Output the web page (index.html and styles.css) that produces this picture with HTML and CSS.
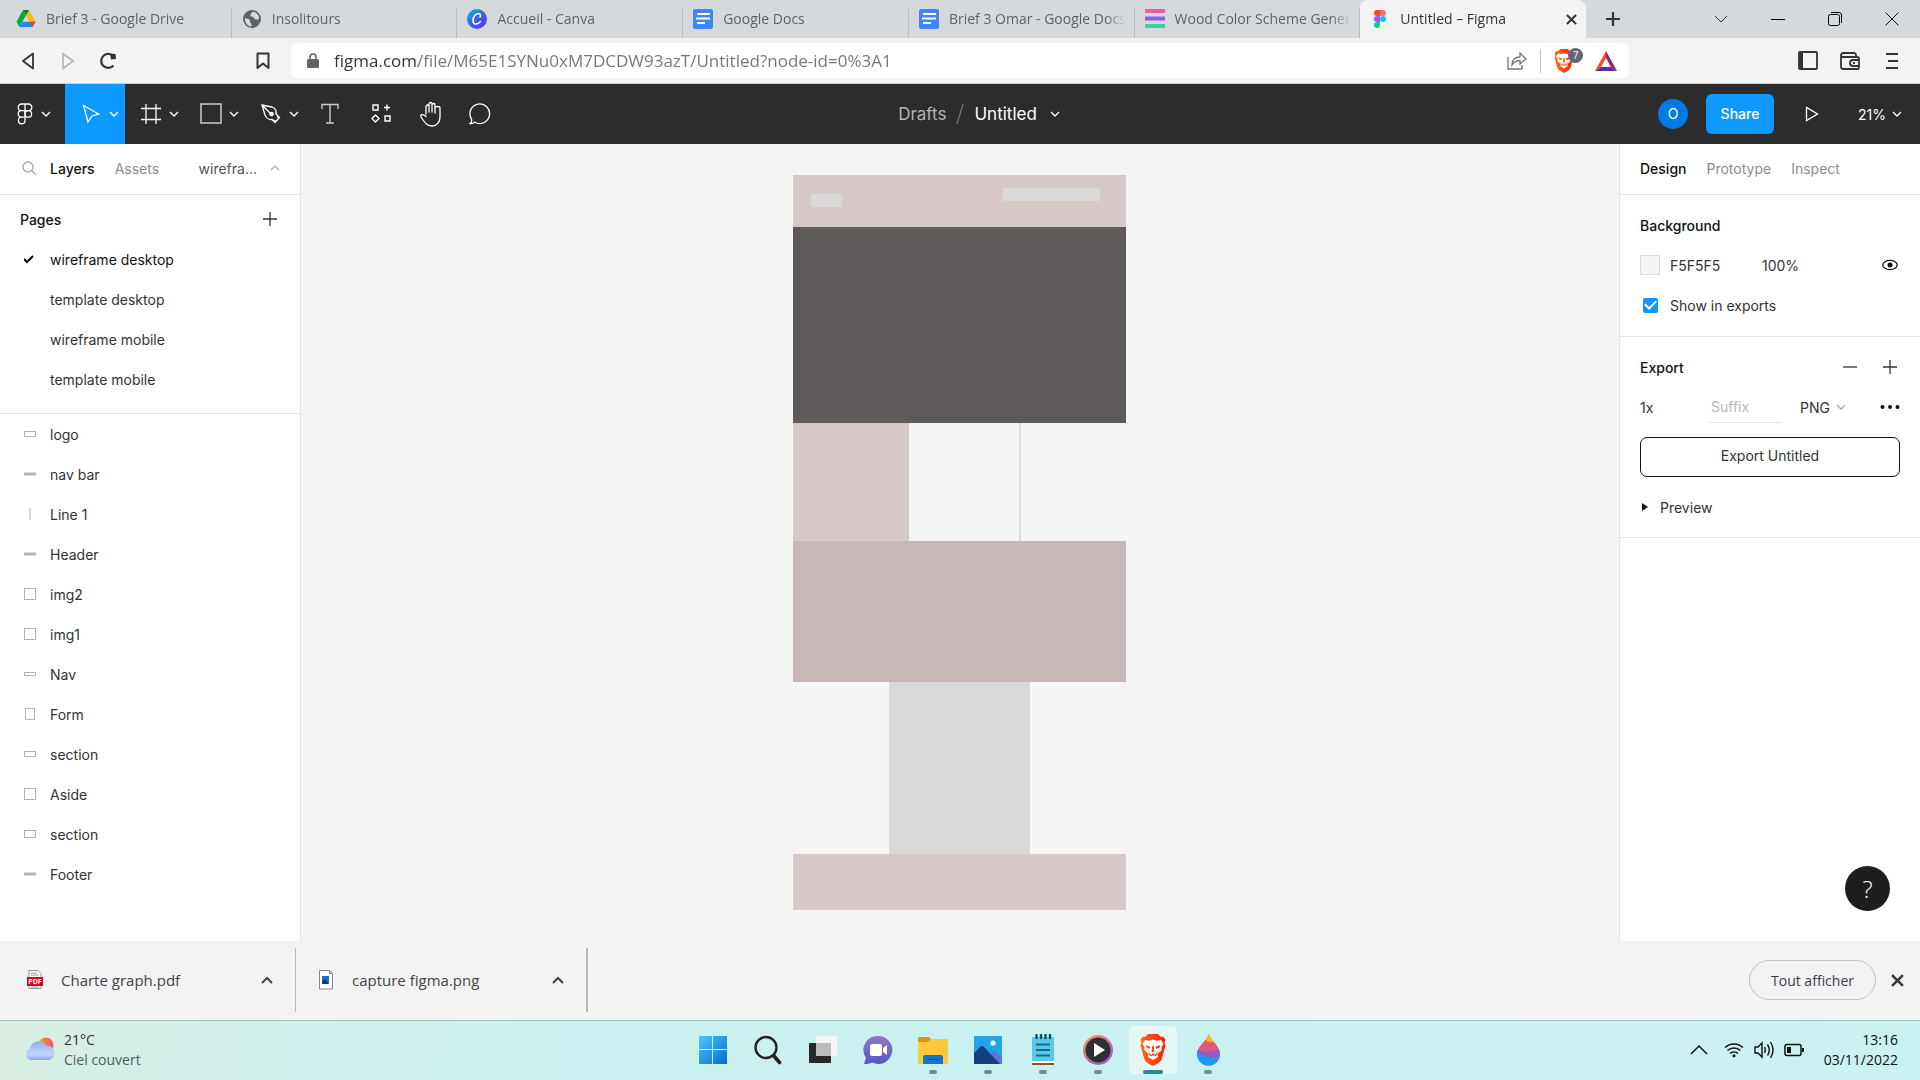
FILE: index.html
```html
<!DOCTYPE html>
<html lang="fr">
<head>
<meta charset="utf-8">
<title>Untitled – Figma</title>
<link rel="stylesheet" href="styles.css">
</head>
<body>
<svg class="defs" aria-hidden="true">
  <defs>
    <symbol id="chev-down" viewBox="0 0 10 10"><path d="M1 3l4 4 4-4" fill="none" stroke="currentColor" stroke-width="1.4"/></symbol>
    <symbol id="docs" viewBox="0 0 20 20"><rect width="20" height="20" rx="2" fill="#4285f4"/><path d="M4 5h13M3 9.500h14M4 14h8" stroke="#fff" stroke-width="2.200"/></symbol>
    <symbol id="plus" viewBox="0 0 16 16"><path d="M8 1v14M1 8h14" stroke="currentColor" stroke-width="1.300"/></symbol>
    <symbol id="caret-up" viewBox="0 0 12 8"><path d="M1 7l5-5 5 5" fill="none" stroke="currentColor" stroke-width="2"/></symbol>
    <symbol id="cross" viewBox="0 0 12 12"><path d="M1 1l10 10M11 1L1 11" stroke="currentColor" stroke-width="2.200"/></symbol>
    <symbol id="brave" viewBox="0 0 26 32">
      <linearGradient id="braveFill" x1="0" x2="1"><stop stop-color="#ff6a1a"/><stop offset="1" stop-color="#ff2000"/></linearGradient>
      <path d="M8 0h10l3 3 2-.5 2.500 3-1 3 1 3-3.500 12.500c-1 4-5 6-9 8-4-2-8-4-9-8L.5 11.500l1-3-1-3 2.500-3 2 .5z" fill="url(#braveFill)"/>
      <path d="M5 6l4 .8 4-1.200 4 1.200L21 6l2.500 4-2 3 .3 3-4.300 4 .5 3-5 3-5-3 .5-3-4.300-4 .3-3-2-3z" fill="#fff"/>
      <path d="M5.500 11l5 1.800-1 2.200-3-1.500zM20.500 11l-5 1.800 1 2.200 3-1.500zM11 19.500h4l-2 1.500zM12.200 12h1.600l.5 6h-2.600zM8 17l3 4 2-1 2 1 3-4-1.800 5.300L13 21.500l-3.200.8z" fill="url(#braveFill)"/>
    </symbol>
  </defs>
</svg>

<header class="browser">
  <div class="tabstrip">
    <nav class="tabs" aria-label="Onglets">
      <a class="tab" href="#">
        <svg width="20" height="20" viewBox="0 0 20 20"><path d="M7 1h6l-6.500 11.500L3.500 18 .5 12.700z" fill="#00ac47"/><path d="M7 1h6l6.500 11.700h-6z" fill="#ffba00"/><path d="M6.500 12.700h13L16.500 18h-13z" fill="#2684fc"/><path d="M7 1h6l-3 5.300z" fill="#00832d"/><path d="M13.500 12.700h6l-3 5.300z" fill="#ea4335"/></svg>
        <span class="tab-title">Brief 3 - Google Drive</span></a>
      <a class="tab" href="#">
        <svg width="20" height="20" viewBox="0 0 20 20"><circle cx="10" cy="10" r="9" fill="#5f6368"/><path d="M3 9c2 1 5 .5 5 3s2 2 1.500 5.500C5 17 2.500 13 3 9zM11 2.500c-1 2-3 1.500-2.500 4C9 8 11 7 12 9s3 1 4 2l1-2c0-3-3-6-6-6.500z" fill="#d5d9dc"/></svg>
        <span class="tab-title">Insolitours</span></a>
      <a class="tab" href="#">
        <svg width="20" height="20" viewBox="0 0 20 20"><linearGradient id="cv" x1="0" y1="0" x2="1" y2="1"><stop stop-color="#00c4cc"/><stop offset=".6" stop-color="#4154e8"/><stop offset="1" stop-color="#7d2ae8"/></linearGradient><circle cx="10" cy="10" r="10" fill="url(#cv)"/><path d="M13 8c1-1.500.5-3.500-1.500-3.500C8.500 4.500 6 8 6 11.500c0 4.500 4.500 4.500 7.500 1" fill="none" stroke="#fff" stroke-width="1.600" stroke-linecap="round"/></svg>
        <span class="tab-title">Accueil - Canva</span></a>
      <a class="tab" href="#"><svg width="20" height="20"><use href="#docs"/></svg><span class="tab-title">Google Docs</span></a>
      <a class="tab" href="#"><svg width="20" height="20"><use href="#docs"/></svg><span class="tab-title">Brief 3 Omar - Google Docs</span></a>
      <a class="tab" href="#">
        <svg width="20" height="20" viewBox="0 0 20 20"><path d="M0 2h20" stroke="#ec5fa5" stroke-width="4"/><path d="M0 9.500h20" stroke="#8b5fe8" stroke-width="4"/><path d="M0 17h20" stroke="#34d399" stroke-width="4"/></svg>
        <span class="tab-title">Wood Color Scheme Generator</span></a>
      <a class="tab tab-active" href="#" aria-current="page">
        <svg width="20" height="20" viewBox="0 0 20 20"><path d="M7 1h3v6H7a3 3 0 010-6z" fill="#f24e1e"/><path d="M10 1h3a3 3 0 010 6h-3z" fill="#ff7262"/><path d="M7 7h3v6H7a3 3 0 010-6z" fill="#a259ff"/><circle cx="13" cy="10" r="3" fill="#1abcfe"/><path d="M7 13h3v3.500A3 3 0 117 13z" fill="#0acf83"/></svg>
        <span class="tab-title">Untitled – Figma</span>
        <svg class="tab-close" width="11" height="11"><use href="#cross"/></svg></a>
    </nav>
    <button class="new-tab" aria-label="Nouvel onglet"><svg width="16" height="16" viewBox="0 0 16 16"><path d="M8 1v14M1 8h14" stroke="#333" stroke-width="2.200"/></svg></button>
    <div class="window-controls">
      <button aria-label="Rechercher"><svg width="14" height="14" viewBox="0 0 14 14"><path d="M1 4l6 6 6-6" fill="none" stroke="#333"/></svg></button>
      <button aria-label="Réduire"><svg width="14" height="14" viewBox="0 0 14 14"><path d="M0 7.500h14" stroke="#000"/></svg></button>
      <button aria-label="Restaurer"><svg width="14" height="14" viewBox="0 0 14 14" fill="none" stroke="#000"><rect x=".5" y="2.500" width="11" height="11" rx="2"/><path d="M3 .5h8a2.500 2.500 0 012.500 2.500v8"/></svg></button>
      <button aria-label="Fermer"><svg width="14" height="14" viewBox="0 0 14 14"><path d="M.5.5l13 13M13.500.5l-13 13" stroke="#111"/></svg></button>
    </div>
  </div>

  <div class="navbar">
    <div class="nav-left">
      <button aria-label="Retour"><svg width="16" height="18" viewBox="0 0 16 18"><path d="M13 1.500v15L3 9z" fill="none" stroke="#333" stroke-width="1.800" stroke-linejoin="round"/></svg></button>
      <button aria-label="Avancer"><svg width="16" height="18" viewBox="0 0 16 18"><path d="M3 1.500v15L13 9z" fill="none" stroke="#b9b9b9" stroke-width="1.800" stroke-linejoin="round"/></svg></button>
      <button aria-label="Recharger"><svg width="18" height="18" viewBox="0 0 18 18"><path d="M14.500 13.500A7 7 0 1115 5" fill="none" stroke="#333" stroke-width="2.200"/><path d="M11 1.500l5.500.5.500 5-5 .5z" fill="#333"/></svg></button>
      <button class="bookmark" aria-label="Favori"><svg width="14" height="18" viewBox="0 0 14 18"><path d="M1.500 1.500h11v14.500L7 11.500 1.500 16z" fill="none" stroke="#333" stroke-width="2" stroke-linejoin="round"/></svg></button>
    </div>
    <div class="address">
      <svg width="12" height="16" viewBox="0 0 12 16"><rect y="6" width="12" height="9" rx="1.500" fill="#5f6368"/><path d="M3 7V4a3 3 0 016 0v3" fill="none" stroke="#5f6368" stroke-width="1.600"/></svg>
      <input class="url" type="text" aria-label="Adresse" value="figma.com/file/M65E1SYNu0xM7DCDW93azT/Untitled?node-id=0%3A1">
      <button aria-label="Partager"><svg width="20" height="20" viewBox="0 0 20 20" fill="none" stroke="#777" stroke-width="1.300"><path d="M1 6v12h14v-4M5 14c0-5 3-8 8-8V2l6 6-6 5v-3.500c-4 0-6 1-8 4.500z"/></svg></button>
      <span class="divider"></span>
      <button class="shields" aria-label="Brave Shields"><svg width="20" height="24"><use href="#brave"/></svg><span class="badge">7</span></button>
      <button aria-label="Brave Rewards"><svg width="22" height="20" viewBox="0 0 22 20"><path d="M11 0L0 20l6-4 5-9z" fill="#ff4724"/><path d="M11 0l11 20-6-4-5-9z" fill="#9e1f63"/><path d="M0 20h22l-6-4H6z" fill="#662d91"/></svg></button>
    </div>
    <div class="nav-right">
      <button aria-label="Panneau latéral"><svg width="20" height="20" viewBox="0 0 20 20"><rect x="1" y="1" width="18" height="17" rx="1" fill="none" stroke="#333" stroke-width="1.800"/><path d="M1 1h4v17H1z" fill="#333"/></svg></button>
      <button aria-label="Portefeuille"><svg width="20" height="18" viewBox="0 0 20 18" fill="none" stroke="#333" stroke-width="1.800"><path d="M16 5V3a2 2 0 00-2-2H3a2 2 0 000 4h14a2 2 0 012 2v8a2 2 0 01-2 2H3a2 2 0 01-2-2V3M19 8h-6a3 3 0 000 6h6M13 11h2"/></svg></button>
      <button aria-label="Menu"><svg width="12" height="18" viewBox="0 0 12 18"><path d="M0 2h12M2 9h10M0 16h12" stroke="#333" stroke-width="2"/></svg></button>
    </div>
  </div>
</header>

<div class="toolbar">
  <div class="tools">
    <button class="tool tool-menu" aria-label="Menu principal"><svg width="18" height="22" viewBox="0 0 18 22" fill="none" stroke="#fff" stroke-width="1.300"><path d="M9 1H5.500a3.300 3.300 0 000 6.600H9zM9 1h3.500a3.300 3.300 0 010 6.600H9zM9 7.600H5.500a3.300 3.300 0 000 6.600H9zM9 14.200H5.500A3.300 3.300 0 109 17.500z"/><circle cx="12.300" cy="10.900" r="3.300"/></svg><svg width="10" height="10"><use href="#chev-down"/></svg></button>
    <button class="tool tool-active" aria-label="Déplacer"><svg width="22" height="22" viewBox="0 0 22 22" fill="none" stroke="#fff" stroke-width="1.300"><path d="M3.500 2.500l15 8.500-6.500 2-4 6z"/></svg><svg width="10" height="10"><use href="#chev-down"/></svg></button>
    <button class="tool" aria-label="Cadre"><svg width="22" height="22" viewBox="0 0 22 22" stroke="#fff" stroke-width="1.300"><path d="M6 1v20M16 1v20M1 5.500h20M1 16.500h20"/></svg><svg width="10" height="10"><use href="#chev-down"/></svg></button>
    <button class="tool" aria-label="Rectangle"><svg width="22" height="22" viewBox="0 0 22 22"><rect x="1" y="1" width="20" height="19" fill="none" stroke="#ccc" stroke-width="1.500"/></svg><svg width="10" height="10"><use href="#chev-down"/></svg></button>
    <button class="tool" aria-label="Plume"><svg width="22" height="22" viewBox="0 0 22 22" fill="none" stroke="#fff" stroke-width="1.300"><path d="M2 2l10 2c3 1 4.500 4 4 7l3.500 3.500-4.500 5-3-3C9 17 6 15 5 12zM2 2l9 9M20 14.500l-3-.5M13 17l3 1"/><circle cx="11.500" cy="11" r="1.700" fill="#fff"/></svg><svg width="10" height="10"><use href="#chev-down"/></svg></button>
    <button class="tool tool-single" aria-label="Texte"><svg width="18" height="22" viewBox="0 0 18 22" fill="none" stroke="#ccc" stroke-width="1.400"><path d="M1 6V1.500h16V6M9 1.500v18M5 20h8"/></svg></button>
    <button class="tool tool-single" aria-label="Ressources"><svg width="22" height="22" viewBox="0 0 22 22" fill="none" stroke="#fff" stroke-width="1.400"><path d="M4 2h5v5H4zM16 13h5v5h-5zM18 1.500v6M15 4.500h6M6.500 12l3.500 3.500L6.500 19 3 15.500z"/></svg></button>
    <button class="tool tool-single" aria-label="Main"><svg width="24" height="26" viewBox="0 0 24 26" fill="none" stroke="#fff" stroke-width="1.300" stroke-linejoin="round" stroke-linecap="round"><path d="M8 13V5.500c0-2 3-2 3 0V11 3c0-2 3-2 3 0v8-7c0-2 3-2 3 0v8-5c0-2 5-2 5 0v9c0 5-3 9-8 9s-7-3-11-9c-1-2 1-4 5-.5"/></svg></button>
    <button class="tool tool-single" aria-label="Commentaire"><svg width="22" height="22" viewBox="0 0 22 22" fill="none" stroke="#fff" stroke-width="1.300"><path d="M1 20.500c2-1 2-2.500 1.500-4.500A9.800 9.800 0 115.500 19c-1 1.500-2.500 1.700-4.500 1.500z"/></svg></button>
  </div>
  <div class="file-title">
    <a class="drafts" href="#">Drafts</a>
    <svg width="8" height="20" viewBox="0 0 8 20"><path d="M1 20L7 0" stroke="#777" stroke-width="1.200"/></svg>
    <button class="file-name">Untitled <svg width="10" height="10"><use href="#chev-down"/></svg></button>
  </div>
  <div class="actions">
    <span class="avatar">O</span>
    <button class="share">Share</button>
    <button class="play" aria-label="Présenter"><svg width="14" height="16" viewBox="0 0 14 16"><path d="M1.500 1.500v13L12.500 8z" fill="none" stroke="#fff" stroke-width="1.300"/></svg></button>
    <button class="zoom">21% <svg width="10" height="10"><use href="#chev-down"/></svg></button>
  </div>
</div>

<main class="workspace">
  <aside class="panel panel-left">
    <div class="panel-tabs left-tabs">
      <svg class="search" width="16" height="16" viewBox="0 0 16 16" fill="none" stroke="#aaa" stroke-width="1.400"><circle cx="7" cy="7" r="5"/><path d="M10.500 10.500L15 15"/></svg>
      <a class="current" href="#">Layers</a>
      <a href="#">Assets</a>
      <button class="page-switch">wirefra... <svg width="10" height="10" viewBox="0 0 10 10"><path d="M1 7l4-4 4 4" fill="none" stroke="#aaa" stroke-width="1.200"/></svg></button>
    </div>
    <section class="pages">
      <div class="pages-head"><h2>Pages</h2><button class="icon-btn" aria-label="Ajouter une page"><svg width="16" height="16"><use href="#plus"/></svg></button></div>
      <ul class="rows">
        <li class="row row-current"><svg width="12" height="12" viewBox="0 0 12 12"><path d="M0 6l3 3 6-6" fill="none" stroke="#000" stroke-width="2"/></svg>wireframe desktop</li>
        <li class="row"><span></span>template desktop</li>
        <li class="row"><span></span>wireframe mobile</li>
        <li class="row"><span></span>template mobile</li>
      </ul>
    </section>
    <ul class="rows layers">
      <li class="row"><svg width="12" height="12" viewBox="0 0 12 12"><rect x=".5" y="3.500" width="11" height="5"/></svg>logo</li>
      <li class="row"><svg width="12" height="12" viewBox="0 0 12 12"><path d="M0 6h12" stroke-width="3"/></svg>nav bar</li>
      <li class="row"><svg width="12" height="12" viewBox="0 0 12 12"><path d="M6 0v12"/></svg>Line 1</li>
      <li class="row"><svg width="12" height="12" viewBox="0 0 12 12"><path d="M0 6h12" stroke-width="3"/></svg>Header</li>
      <li class="row"><svg width="12" height="12" viewBox="0 0 12 12"><rect x=".5" y=".5" width="11" height="11"/></svg>img2</li>
      <li class="row"><svg width="12" height="12" viewBox="0 0 12 12"><rect x=".5" y=".5" width="11" height="11"/></svg>img1</li>
      <li class="row"><svg width="12" height="12" viewBox="0 0 12 12"><rect x=".5" y="4.500" width="11" height="3"/></svg>Nav</li>
      <li class="row"><svg width="12" height="12" viewBox="0 0 12 12"><rect x="1.500" y=".5" width="9" height="11"/></svg>Form</li>
      <li class="row"><svg width="12" height="12" viewBox="0 0 12 12"><rect x=".5" y="3.500" width="11" height="5"/></svg>section</li>
      <li class="row"><svg width="12" height="12" viewBox="0 0 12 12"><rect x=".5" y=".5" width="11" height="11"/></svg>Aside</li>
      <li class="row"><svg width="12" height="12" viewBox="0 0 12 12"><rect x=".5" y="2.500" width="11" height="7"/></svg>section</li>
      <li class="row"><svg width="12" height="12" viewBox="0 0 12 12"><path d="M0 6h12" stroke-width="3"/></svg>Footer</li>
    </ul>
  </aside>

  <div class="canvas">
    <div class="artboard">
      <div class="wf-header"><div class="wf-logo"></div><div class="wf-nav"></div></div>
      <div class="wf-hero"></div>
      <div class="wf-columns"><div class="wf-aside"></div><div class="wf-line"></div></div>
      <div class="wf-section"></div>
      <div class="wf-form"></div>
      <div class="wf-footer"></div>
    </div>
  </div>

  <aside class="panel panel-right">
    <div class="panel-tabs">
      <a class="current" href="#">Design</a>
      <a href="#">Prototype</a>
      <a href="#">Inspect</a>
    </div>
    <section class="prop">
      <div class="prop-row"><h2>Background</h2></div>
      <div class="prop-row">
        <span class="swatch"></span>
        <input class="field hex" type="text" aria-label="Couleur" value="F5F5F5">
        <input class="field opacity" type="text" aria-label="Opacité" value="100%">
        <button class="icon-btn push" aria-label="Visibilité"><svg width="16" height="12" viewBox="0 0 16 12"><ellipse cx="8" cy="6" rx="7.200" ry="4.700" fill="none" stroke="#111" stroke-width="1.300"/><circle cx="8" cy="6" r="2.500" fill="#111"/></svg></button>
      </div>
      <div class="prop-row"><label class="check"><input type="checkbox" checked>Show in exports</label></div>
    </section>
    <section class="prop">
      <div class="prop-row"><h2>Export</h2>
        <button class="icon-btn push" aria-label="Retirer"><svg width="16" height="16" viewBox="0 0 16 16"><path d="M1 8h14" stroke="#333" stroke-width="1.300"/></svg></button>
        <button class="icon-btn" aria-label="Ajouter"><svg width="16" height="16"><use href="#plus"/></svg></button></div>
      <div class="prop-row">
        <input class="field scale" type="text" aria-label="Échelle" value="1x">
        <input class="field suffix" type="text" aria-label="Suffixe" placeholder="Suffix">
        <label class="format"><select class="field" aria-label="Format"><option>PNG</option></select><svg width="10" height="10"><use href="#chev-down"/></svg></label>
        <button class="icon-btn push" aria-label="Plus d'options"><svg width="20" height="4" viewBox="0 0 20 4" fill="#111"><circle cx="2.500" cy="2" r="2"/><circle cx="10" cy="2" r="2"/><circle cx="17.500" cy="2" r="2"/></svg></button>
      </div>
      <button class="export">Export Untitled</button>
      <button class="preview"><svg width="10" height="8" viewBox="0 0 10 8"><path d="M2 0l6 4-6 4z" fill="#111"/></svg>Preview</button>
    </section>
    <button class="help" aria-label="Aide">?</button>
  </aside>
</main>

<section class="downloads" aria-label="Téléchargements">
  <div class="download">
    <svg width="18" height="20" viewBox="0 0 18 20"><path d="M3 .5h9l3 3v15H3z" fill="#fff" stroke="#999"/><path d="M5 3h6M5 5h8M5 17h8" stroke="#999"/><rect x="1" y="7" width="16" height="9" fill="#e2001a"/><text x="9" y="14" text-anchor="middle" class="pdf-tag">PDF</text></svg>
    <a href="#">Charte graph.pdf</a>
    <button aria-label="Options"><svg width="12" height="8"><use href="#caret-up"/></svg></button>
  </div>
  <div class="download">
    <svg width="18" height="20" viewBox="0 0 18 20"><path d="M2.500.5h10l3 3V19h-13z" fill="#fff" stroke="#888"/><path d="M12.500.5v3h3" fill="none" stroke="#888"/><rect x="5" y="6" width="7" height="8" fill="#1673c7"/><path d="M5 12l3-3 4 5H5z" fill="#123a75"/></svg>
    <a href="#">capture figma.png</a>
    <button aria-label="Options"><svg width="12" height="8"><use href="#caret-up"/></svg></button>
  </div>
  <button class="show-all">Tout afficher</button>
  <button class="dismiss" aria-label="Fermer"><svg width="13" height="13"><use href="#cross"/></svg></button>
</section>

<footer class="taskbar">
  <div class="weather">
    <svg width="32" height="26" viewBox="0 0 32 26"><linearGradient id="sun" x2="1"><stop stop-color="#ff9d2e"/><stop offset="1" stop-color="#f9526a"/></linearGradient><linearGradient id="cl" x2="0" y2="1"><stop stop-color="#8fb2ee"/><stop offset=".7" stop-color="#c3d6fa"/><stop offset="1" stop-color="#8aa6ea"/></linearGradient><circle cx="22" cy="8" r="7.500" fill="url(#sun)"/><path d="M7 23a6 6 0 01-1-11.500A8.500 8.500 0 0122 9a7 7 0 013 14z" fill="url(#cl)"/></svg>
    <div><p>21°C</p><p class="sky">Ciel couvert</p></div>
  </div>
  <div class="apps">
    <button class="app" aria-label="Démarrer"><svg width="30" height="30" viewBox="0 0 30 30"><linearGradient id="win" x2="1" y2="1"><stop stop-color="#4cc8fa"/><stop offset="1" stop-color="#0669cf"/></linearGradient><path d="M1 1h13v13H1zM15 1h14v13H15zM1 15h13v14H1zM15 15h14v14H15z" fill="url(#win)"/></svg></button>
    <button class="app" aria-label="Rechercher"><svg width="30" height="30" viewBox="0 0 30 30" fill="none" stroke="#222"><circle cx="13" cy="12.500" r="10.500" stroke-width="2.400"/><path d="M20.500 20.500l6 7" stroke-width="3.600" stroke-linecap="round"/></svg></button>
    <button class="app" aria-label="Vue des tâches"><svg width="30" height="30" viewBox="0 0 30 30"><rect x="1" y="8" width="22" height="20" rx="1" fill="#272727"/><rect x="8" y="1" width="21" height="20" rx="1" fill="#f4f4f4"/><path d="M8 8h15v13H8z" fill="#bcbcbc"/></svg></button>
    <button class="app" aria-label="Conversation"><svg width="30" height="30" viewBox="0 0 30 30"><linearGradient id="chat" y2="1" x2="0"><stop stop-color="#9078c4"/><stop offset="1" stop-color="#5458c8"/></linearGradient><path d="M15 1a14 14 0 11-6 26.500c-2 1-5 1.500-8 1.500l2-6A14 14 0 0115 1z" fill="url(#chat)"/><rect x="7" y="9" width="12" height="12" rx="2" fill="#fff"/><path d="M20 13l4-3v10l-4-3z" fill="#fff"/></svg></button>
    <button class="app running" aria-label="Explorateur"><svg width="30" height="30" viewBox="0 0 30 30"><path d="M0 3a1 1 0 011-1h10l3 3-3 4H0z" fill="#dd9a05"/><path d="M0 7h10l3-3h16a1 1 0 011 1v24H0z" fill="#fdc93a"/><path d="M5 29v-7a2 2 0 012-2h16a2 2 0 012 2v7z" fill="#0f78d0"/><path d="M9 24.500h12" stroke="#084c94"/></svg></button>
    <button class="app running" aria-label="Photos"><svg width="30" height="30" viewBox="0 0 30 30"><rect x="1" y="1" width="28" height="28" rx="1" fill="#24a3e8"/><path d="M14 24l7-9 8 8v6H14z" fill="#5f74d6"/><path d="M1 18l6-6q2-2 4 0l16 17H1z" fill="#143f82"/><circle cx="20" cy="8" r="2.600" fill="#fff"/></svg></button>
    <button class="app running" aria-label="Bloc-notes"><svg width="30" height="32" viewBox="0 0 30 32"><rect x="4" y="3" width="22" height="26" rx="1" fill="#5cc8e3"/><path d="M4 28h22v3H4z" fill="#a1500f"/><path d="M4 27h22v2H4z" fill="#fff"/><path d="M8.500 1v3M13 1v3M17.500 1v3M22 1v3" stroke="#06506e" stroke-width="2.400" stroke-linecap="round"/><path d="M8 10.500h14M8 16h14M8 21.500h14" stroke="#087094" stroke-width="1.800"/></svg></button>
    <button class="app running" aria-label="Lecteur multimédia"><svg width="32" height="32" viewBox="0 0 32 32"><linearGradient id="med" x2=".6" y2="1"><stop stop-color="#ff9c45"/><stop offset="1" stop-color="#a556c8"/></linearGradient><circle cx="16" cy="16" r="15" fill="url(#med)"/><circle cx="16" cy="16" r="12.500" fill="#303034"/><path d="M12 9l11 7-11 7z" fill="#fff"/></svg></button>
    <button class="app running focused" aria-label="Brave"><svg width="26" height="32"><use href="#brave"/></svg></button>
    <button class="app running" aria-label="Paint 3D"><svg width="26" height="32" viewBox="0 0 26 32"><clipPath id="drop"><path d="M14 0c1 5 11 12 11 20a11.500 11.500 0 01-23 0C2 12 11 8 14 0z"/></clipPath><g clip-path="url(#drop)"><path d="M0 0h26v32H0z" fill="#e4577f"/><path d="M9 0h17v11c-5-1-9-4-14-3z" fill="#fdb913"/><path d="M0 14c9 6 16 3 26 1v10c-8 2-14 1-26-4z" fill="#8b5fc4"/><path d="M0 19c8 0 14 8 26 4v9H0z" fill="#1e9be8"/></g></svg></button>
  </div>
  <div class="tray">
    <svg width="18" height="12" viewBox="0 0 18 12"><path d="M1 10l8-8 8 8" fill="none" stroke="#111" stroke-width="1.500"/></svg>
    <svg width="20" height="16" viewBox="0 0 20 16" fill="none" stroke="#111" stroke-width="1.500"><path d="M1 5.500a13 13 0 0118 0M3.500 8.500a9.500 9.500 0 0113 0M6 11.500a6 6 0 018 0"/><circle cx="10" cy="13.800" r="1.500" fill="#111" stroke="none"/></svg>
    <svg width="20" height="18" viewBox="0 0 20 18" fill="none" stroke="#111" stroke-width="1.400"><path d="M1 6h3l4-4v14l-4-4H1zM10.500 6q1.500 3 0 6M13.500 3.500q3.500 5.500 0 11M16.500 1q5 8 0 16"/></svg>
    <svg width="20" height="14" viewBox="0 0 20 14"><rect x="1" y="1.500" width="16" height="11" rx="2" fill="none" stroke="#111" stroke-width="1.500"/><path d="M3 4h4v6H3zM18 5h2v4h-2z" fill="#111"/></svg>
    <div class="clock"><p>13:16</p><p>03/11/2022</p></div>
  </div>
</footer>
</body>
</html>
```
FILE: styles.css
```css
* { box-sizing: border-box; }

body {
  margin: 0;
  min-height: 100vh;
  display: flex;
  flex-direction: column;
  font-family: Inter, "Liberation Sans", sans-serif;
  font-size: 14px;
  color: #333;
  background: #f5f5f5;
}

button, input, select {
  font: inherit;
  color: inherit;
  background: none;
  border: 0;
  padding: 0;
  margin: 0;
  outline: 0;
}

a { color: inherit; text-decoration: none; }
h2, p, ul { margin: 0; padding: 0; }
ul { list-style: none; }
h2 { font-size: 14px; font-weight: 500; color: #111; }
svg { display: block; flex: none; }
.defs { position: absolute; width: 0; height: 0; }

button {
  display: flex;
  align-items: center;
  justify-content: center;
}

/* Browser chrome */
.browser, .downloads, .taskbar {
  font-family: "Open Sans", "Noto Sans", sans-serif;
}

.tabstrip {
  height: 38px;
  padding-left: 6px;
  display: flex;
  background: #d5d9dc;
}

.tabs {
  flex: 0 1 1580px;
  min-width: 0;
  display: flex;
  align-items: flex-end;
}

.tab {
  flex: 1 1 0;
  min-width: 0;
  height: 29px;
  padding: 0 8px 9px 10px;
  display: flex;
  align-items: center;
  gap: 10px;
  border-right: 1px solid #b9bdc0;
  color: #5f6368;
}

.tab-title {
  flex: 1;
  overflow: hidden;
  white-space: nowrap;
  line-height: 20px;
  mask-image: linear-gradient(90deg, #000 calc(100% - 20px), transparent);
}

.tab-active {
  height: 38px;
  padding-bottom: 0;
  border-right-color: transparent;
  border-radius: 8px 8px 0 0;
  background: #f3f3f3;
  color: #333;
}

.new-tab { width: 54px; }
.window-controls { margin-left: auto; display: flex; }
.window-controls button { width: 57px; }

.navbar {
  height: 46px;
  display: flex;
  align-items: center;
  background: #f3f3f3;
  border-bottom: 1px solid #d0d0d0;
}

.nav-left, .nav-right {
  width: 291px;
  display: flex;
  align-items: center;
  padding: 0 8px;
}

.nav-left button { width: 40px; height: 34px; }
.nav-left .bookmark { margin-left: auto; }
.nav-right { justify-content: flex-end; gap: 2px; }
.nav-right button { width: 40px; height: 34px; }

.address {
  flex: 1;
  height: 35px;
  padding: 0 2px 0 16px;
  display: flex;
  align-items: center;
  border-radius: 6px;
  background: #fff;
}

.url {
  flex: 1;
  min-width: 0;
  margin-left: 15px;
  font-size: 17px;
  color: transparent;
  background: linear-gradient(90deg, #333 84px, #757575 84px);
  background-clip: text;
}

.address button { width: 42px; height: 34px; }
.divider { width: 1px; height: 24px; margin: 0 2px; background: #c0c0c0; }
.shields { position: relative; }

.badge {
  position: absolute;
  top: 4px;
  right: 2px;
  width: 15px;
  height: 15px;
  border-radius: 8px;
  background: #636678;
  color: #fff;
  font-size: 10px;
  line-height: 15px;
}

/* Editor toolbar */
.toolbar {
  height: 60px;
  display: grid;
  grid-template-columns: 1fr auto 1fr;
  background: #2c2c2c;
  color: #fff;
}

.tools { display: flex; }
.tool { width: 60px; gap: 7px; padding-left: 9px; }
.tool-menu { width: 65px; padding-left: 2px; }
.tool-active { background: #0d99ff; }
.tool-single { width: 50px; padding: 0; }

.file-title {
  display: flex;
  align-items: center;
  gap: 10px;
  padding-left: 38px;
  font-size: 17px;
}

.drafts { color: #b3b3b3; }
.file-name { gap: 13px; }

.actions {
  display: flex;
  align-items: center;
  justify-content: flex-end;
  padding-right: 18px;
}

.avatar {
  width: 30px;
  height: 30px;
  border-radius: 50%;
  background: #007be5;
  text-align: center;
  line-height: 30px;
}

.share {
  width: 68px;
  height: 40px;
  margin-left: 18px;
  padding-bottom: 2px;
  border-radius: 6px;
  background: #0d99ff;
  font-weight: 500;
}

.play { width: 76px; height: 40px; }
.zoom { height: 40px; gap: 6px; margin-left: 8px; }

/* Workspace */
.workspace { flex: 1; display: flex; }
.panel { width: 301px; flex: none; background: #fff; }
.panel-left { border-right: 1px solid #e6e6e6; }
.panel-right { position: relative; border-left: 1px solid #e6e6e6; }

.panel-tabs {
  height: 51px;
  padding: 0 20px 2px;
  display: flex;
  align-items: center;
  gap: 20px;
  border-bottom: 1px solid #e6e6e6;
  color: #8c8c8c;
}

.panel-tabs .current { font-weight: 500; color: #111; }
.left-tabs { padding-left: 21px; }
.search { margin-right: -7px; }
.page-switch { gap: 13px; margin-left: auto; color: #555; }

.pages { padding: 4px 0 14px; border-bottom: 1px solid #e6e6e6; }

.pages-head {
  height: 40px;
  padding: 0 10px 0 20px;
  display: flex;
  align-items: center;
  justify-content: space-between;
}

.icon-btn { width: 40px; height: 40px; color: #333; }

.row {
  height: 40px;
  padding-left: 24px;
  display: grid;
  grid-template-columns: 12px 1fr;
  column-gap: 14px;
  align-items: center;
}

.row-current { color: #111; }
.layers svg { fill: none; stroke: #b3b3b3; }

/* Canvas drawing */
.canvas { flex: 1; padding: 31px 22px 20px 20px; background: #f5f5f5; }
.artboard { width: 333px; margin: 0 auto; }

.wf-header {
  height: 52px;
  padding: 13px 26px 0 18px;
  display: flex;
  justify-content: space-between;
  background: #d7c9c7;
}

.wf-logo, .wf-nav, .wf-form, .wf-line { background: #d9d9d9; }
.wf-logo { width: 31px; height: 13px; margin-top: 6px; }
.wf-nav { width: 97px; height: 13px; }
.wf-hero { height: 196px; background: #5e5a59; }
.wf-columns { height: 118px; display: flex; gap: 110px; }
.wf-aside { width: 116px; background: #d7c9c7; }
.wf-line { width: 2px; }
.wf-section { height: 141px; background: #c7b7b7; }
.wf-form { width: 141px; height: 172px; margin: 0 auto; }
.wf-footer { height: 56px; background: #d7c9c7; }

/* Properties */
.prop { padding: 10px 10px 10px 20px; border-bottom: 1px solid #e6e6e6; }
.prop:first-of-type { padding-bottom: 11px; }
.prop-row { height: 40px; display: flex; align-items: center; }
.push { margin-left: auto; }
.swatch { width: 20px; height: 20px; border: 1px solid #ddd; background: #f5f5f5; }
.hex { width: 82px; margin: 0 10px; }
.opacity { width: 60px; }
.check { display: flex; align-items: center; gap: 12px; }

.check input {
  appearance: none;
  width: 15px;
  height: 15px;
  margin-left: 3px;
  display: grid;
  place-items: center;
  border-radius: 2px;
  background: #0d99ff;
}

.check input:checked::after {
  content: "";
  width: 9px;
  height: 5px;
  margin-bottom: 3px;
  border: solid #fff;
  border-width: 0 0 2px 2px;
  rotate: -45deg;
}

.scale { width: 69px; }
.suffix { width: 73px; height: 32px; padding-left: 2px; border-bottom: 1px solid #e6e6e6; }
.suffix::placeholder { color: #b8b8b8; }
.format { display: flex; align-items: center; gap: 6px; margin-left: 18px; }
.format select { appearance: none; }
.format svg { color: #aaa; }

.export {
  width: calc(100% - 10px);
  height: 40px;
  margin: 10px 0;
  padding-bottom: 3px;
  border: 1px solid #111;
  border-radius: 7px;
}

.preview { height: 40px; gap: 10px; }

.help {
  position: absolute;
  right: 30px;
  bottom: 30px;
  width: 45px;
  height: 45px;
  border-radius: 50%;
  background: #1e1e1e;
  color: #fff;
  font-family: "Open Sans", sans-serif;
  font-size: 24px;
  font-weight: 300;
}

/* Downloads bar */
.downloads {
  height: 79px;
  padding: 7px 13px 8px 0;
  display: flex;
  align-items: center;
  background: #f3f3f3;
}

.download {
  width: 292px;
  height: 64px;
  padding: 0 13px 0 21px;
  display: flex;
  align-items: center;
  gap: 17px;
  border-right: 2px solid #bbb;
  font-size: 15px;
  color: #444;
}

.download:first-child { width: 296px; padding-left: 26px; border-width: 1px; }
.download button { width: 30px; height: 30px; margin-left: auto; color: #444; }
.pdf-tag { font-size: 7px; font-weight: 700; fill: #fff; }

.show-all {
  width: 127px;
  height: 40px;
  margin-left: auto;
  border: 1px solid #c0c0d0;
  border-radius: 20px;
  color: #3a3d50;
}

.dismiss { width: 20px; height: 40px; margin-left: 11px; color: #333; }

/* Taskbar */
.taskbar {
  height: 60px;
  padding-bottom: 2px;
  display: grid;
  grid-template-columns: 1fr auto 1fr;
  align-items: center;
  border-top: 1px solid #a3bcbb;
  background: linear-gradient(100deg, #d9eee2, #d0efea 12%, #caf1ef 30%, #c9f1f1 60%, #cdf0f4 85%, #c8f2f0);
}

.taskbar p { line-height: 20px; }
.weather { display: flex; align-items: center; gap: 8px; padding-left: 24px; }
.sky { color: #52605f; }
.apps { display: flex; gap: 7px; }

.app {
  position: relative;
  width: 48px;
  height: 48px;
  border-radius: 5px;
}

.running::after {
  content: "";
  position: absolute;
  left: 20px;
  bottom: 0;
  width: 8px;
  height: 4px;
  border-radius: 2px;
  background: #728d8b;
}

.focused { background: #e4f7f7; }
.focused::after { left: 14px; width: 20px; background: #25899a; }

.tray {
  display: flex;
  align-items: center;
  justify-content: flex-end;
  gap: 10px;
  padding-right: 22px;
  color: #111;
}

.tray svg:first-child { margin-right: 6px; }
.clock { margin-left: 10px; text-align: right; }
```
